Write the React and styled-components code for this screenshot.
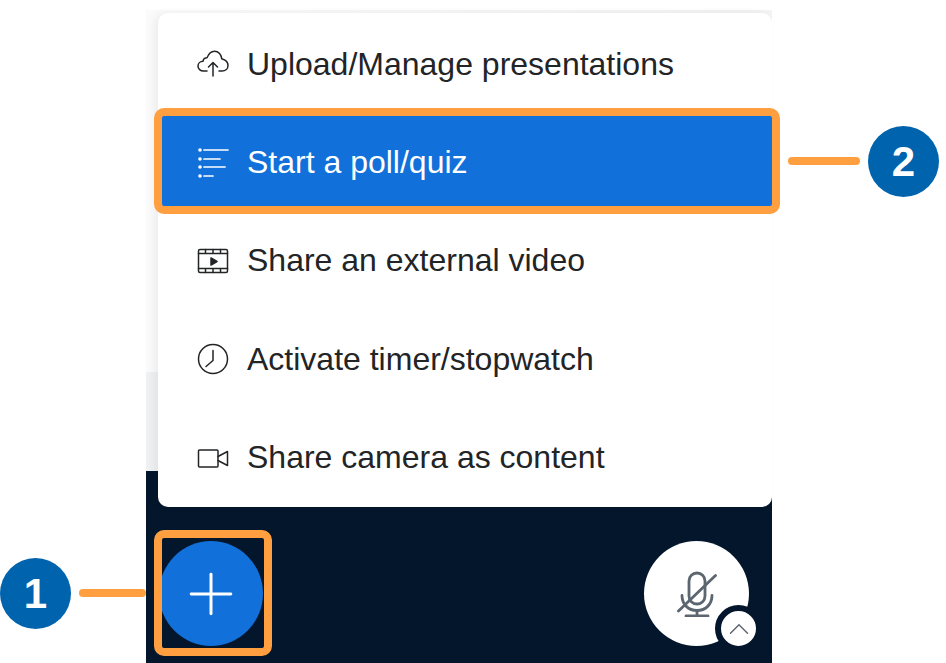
import React from 'react';
import styled, { createGlobalStyle } from 'styled-components';
import { Plus, ChevronUp } from 'lucide-react';

const GlobalStyle = createGlobalStyle`
  html, body {
    margin: 0;
    padding: 0;
    background: #fff;
    font-family: 'Liberation Sans', Arial, sans-serif;
  }
`;

const Stage = styled.div`
  position: relative;
  width: 946px;
  height: 663px;
  overflow: hidden;
  background: #fff;
`;

const Screen = styled.div`
  position: absolute;
  left: 146px;
  top: 10px;
  width: 626px;
  height: 653px;
  display: flex;
  flex-direction: column;
`;

const Content = styled.div`
  height: 362px;
  background: linear-gradient(90deg, #fbfbfb 0%, #f3f3f4 100%);
`;

const ContentDark = styled.div`
  height: 99px;
  background: linear-gradient(90deg, #f0f1f3 0%, #e3e5e8 100%);
`;

const ActionBar = styled.div`
  flex: 1;
  display: flex;
  align-items: flex-start;
  justify-content: space-between;
  padding: 70px 23px 0 13px;
  background: #04162b;
`;

const PlusButton = styled.div`
  width: 104px;
  height: 105px;
  border-radius: 50%;
  background: #1170d9;
  color: #fff;
  display: flex;
  align-items: center;
  justify-content: center;
`;

const MicButton = styled.div`
  position: relative;
  width: 105px;
  height: 105px;
  border-radius: 50%;
  background: #fff;
  display: flex;
  align-items: center;
  justify-content: center;
`;

const MicCaret = styled.div`
  position: absolute;
  right: -13px;
  bottom: -6px;
  width: 35px;
  height: 35px;
  border-radius: 50%;
  background: #fff;
  border: 6px solid #04162b;
  color: #5c6670;
  display: flex;
  align-items: center;
  justify-content: center;
`;

const Menu = styled.ul`
  position: absolute;
  left: 158px;
  top: 13px;
  width: 614px;
  height: 494px;
  margin: 0;
  padding: 2px 0 0;
  box-sizing: border-box;
  list-style: none;
  background: #fff;
  border-radius: 10px;
  display: flex;
  flex-direction: column;
  box-shadow: -4px 0 8px rgba(0, 0, 0, 0.06);
`;

const MenuItem = styled.li`
  height: 98.4px;
  padding-left: 39px;
  display: flex;
  align-items: center;
  gap: 18px;
  font-size: 32px;
  color: ${(p) => (p.$active ? '#fff' : '#222426')};
  background: ${(p) => (p.$active ? '#1170d9' : 'transparent')};
`;

const IconBox = styled.span`
  width: 32px;
  height: 32px;
  flex: none;
  display: block;
`;

const Highlight = styled.div`
  position: absolute;
  box-sizing: border-box;
  border: 8px solid #ff9f40;
  border-radius: 10px;
  left: ${(p) => p.$left}px;
  top: ${(p) => p.$top}px;
  width: ${(p) => p.$width}px;
  height: ${(p) => p.$height}px;
`;

const Leader = styled.div`
  position: absolute;
  height: 8px;
  border-radius: 4px;
  background: #ff9f40;
  left: ${(p) => p.$left}px;
  top: ${(p) => p.$top}px;
  width: ${(p) => p.$width}px;
`;

const Badge = styled.div`
  position: absolute;
  left: ${(p) => p.$left}px;
  top: ${(p) => p.$top}px;
  width: 71px;
  height: 71px;
  border-radius: 50%;
  background: #0063ad;
  color: #fff;
  font-family: 'Liberation Sans', Arial, sans-serif;
  font-weight: 700;
  font-size: 42px;
  display: flex;
  align-items: center;
  justify-content: center;
`;

const iconProps = {
  viewBox: '0 0 32 32',
  width: 32,
  height: 32,
  fill: 'none',
  stroke: 'currentColor',
  strokeWidth: 1.5,
  strokeLinecap: 'round',
  strokeLinejoin: 'round',
};

const UploadIcon = () => (
  <svg {...iconProps}>
    <path d="M10 23H6.500C3.400 23 1 21 1 18.200C1 15.400 3.200 13.300 6 13.300C6.400 11 8 9.800 10 9.800C11.500 6 14 3.200 17.500 3.200C21.500 3.200 24.500 6.500 24.700 10.800C28.300 11.800 31 14.500 31 17.500C31 20.800 28.500 23 25 23H22" />
    <path d="M16 28V14.500M11.500 19 16 14.500 20.500 19" />
  </svg>
);

const PollIcon = () => (
  <svg {...iconProps} strokeWidth={1.7}>
    <path d="M7 3h24M7 12h16M7 20h21M7 29h9" />
    <circle cx="3" cy="3" r="1.800" fill="currentColor" stroke="none" />
    <circle cx="3" cy="12" r="1.800" fill="currentColor" stroke="none" />
    <circle cx="3" cy="20" r="1.800" fill="currentColor" stroke="none" />
    <circle cx="3" cy="29" r="1.800" fill="currentColor" stroke="none" />
  </svg>
);

const VideoIcon = () => (
  <svg {...iconProps}>
    <rect x="1.500" y="4.500" width="29" height="23" rx="1.500" />
    <path d="M1.500 8.500h29M1.500 23.500h29M8.500 4.500v4M16 4.500v4M23.500 4.500v4M8.500 23.500v4M16 23.500v4M23.500 23.500v4" />
    <path d="M14 13 20 16.500 14 20Z" fill="currentColor" />
  </svg>
);

const TimerIcon = () => (
  <svg {...iconProps}>
    <circle cx="16" cy="16" r="14.500" />
    <path d="M16 7.500V17.500L9 23.500" />
  </svg>
);

const CameraIcon = () => (
  <svg {...iconProps}>
    <rect x="1.500" y="8" width="19.500" height="17" rx="1" />
    <path d="M21 14.500 30.500 9.500v14L21 18.500" />
  </svg>
);

const MicIcon = () => (
  <svg viewBox="0 0 40 46" width="40" height="46" fill="none" stroke="#5c6670" strokeWidth="2.800" strokeLinecap="round">
    <rect x="12" y="2" width="16" height="31" rx="8" />
    <path d="M5 24.500c0 9 6.500 15 15 15s15-6 15-15" />
    <path d="M20 39.500V45M9 45h22" />
    <path d="M1.500 40 38.500 4.500" />
  </svg>
);

const items = [
  { label: 'Upload/Manage presentations', Icon: UploadIcon },
  { label: 'Start a poll/quiz', Icon: PollIcon, active: true },
  { label: 'Share an external video', Icon: VideoIcon },
  { label: 'Activate timer/stopwatch', Icon: TimerIcon },
  { label: 'Share camera as content', Icon: CameraIcon },
];

export default function App() {
  return (
    <Stage>
      <GlobalStyle />
      <Screen>
        <Content />
        <ContentDark />
        <ActionBar>
          <PlusButton>
            <Plus size={68} strokeWidth={1.05} />
          </PlusButton>
          <MicButton>
            <MicIcon />
            <MicCaret>
              <ChevronUp size={34} strokeWidth={1} />
            </MicCaret>
          </MicButton>
        </ActionBar>
      </Screen>

      <Menu>
        {items.map(({ label, Icon, active }) => (
          <MenuItem key={label} $active={active}>
            <IconBox>
              <Icon />
            </IconBox>
            {label}
          </MenuItem>
        ))}
      </Menu>

      <Highlight $left={154} $top={108} $width={626} $height={106} />
      <Highlight $left={154} $top={530} $width={118} $height={126} />
      <Leader $left={788} $top={157} $width={72} />
      <Leader $left={79} $top={589} $width={67} />
      <Badge $left={868} $top={126}>2</Badge>
      <Badge $left={0} $top={558}>1</Badge>
    </Stage>
  );
}
